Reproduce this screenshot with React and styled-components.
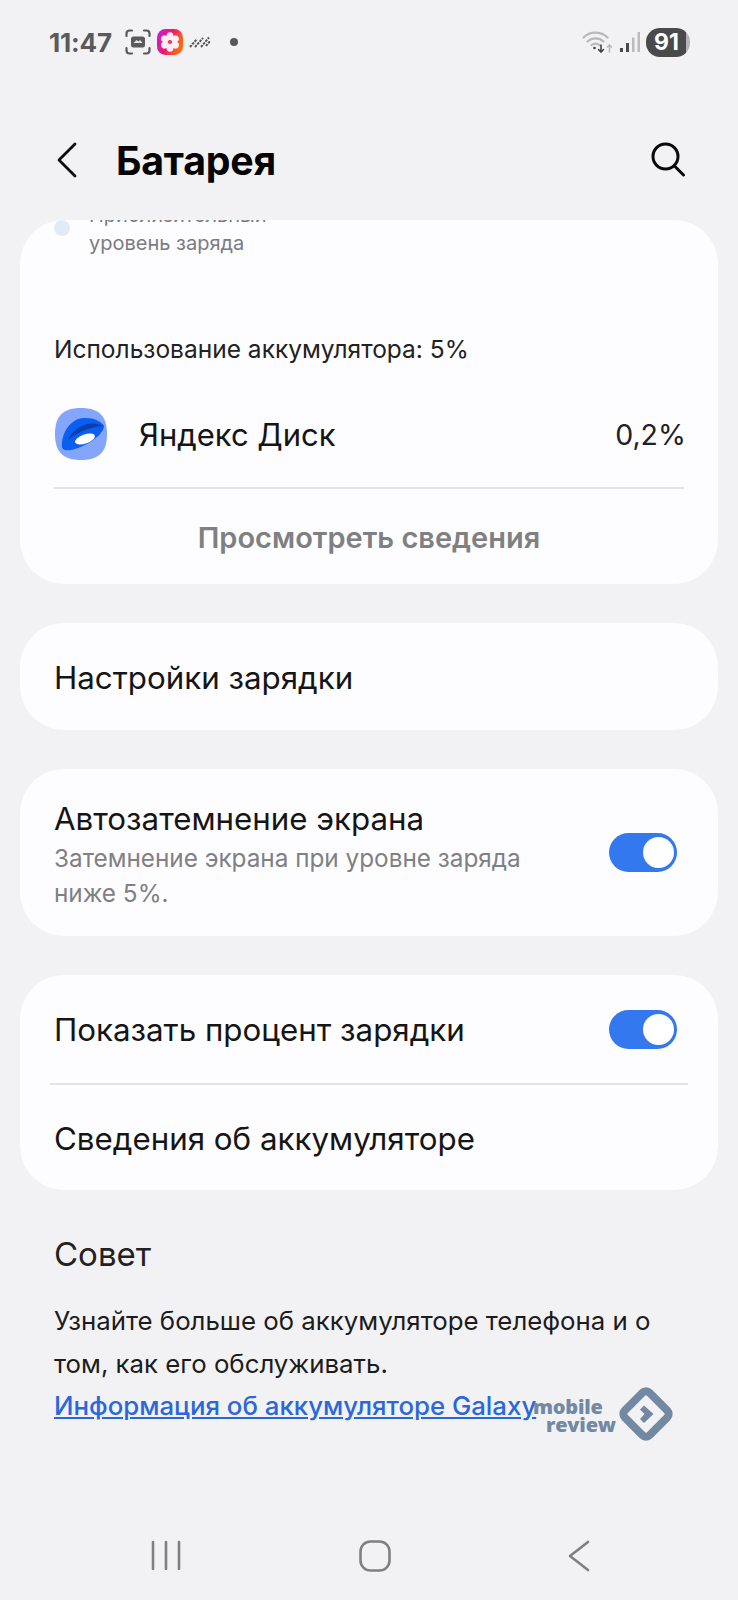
import React from "react";
import styled, { createGlobalStyle } from "styled-components";

const Global = createGlobalStyle`
  html, body { margin: 0; padding: 0; background: #f2f2f4; }
  * { box-sizing: border-box; }
`;
const Page = styled.div`
  position: relative; width: 738px; height: 1600px; background: #f2f2f4; overflow: hidden;
  display: flex; flex-direction: column;
  font-family: Inter, "Noto Sans", sans-serif; color: #111;
`;
const StatusBar = styled.div`
  height: 84px; padding: 0 48px 0 49px; display: flex; align-items: center; justify-content: space-between;
`;
const StatusGroup = styled.div`display: flex; align-items: center; gap: ${p => p.$gap || 0}px; margin-left: ${p => p.$ml || 0}px;`;
const Clock = styled.span`font-size: 26px; font-weight: 700; color: #5a5a5c; letter-spacing: -0.2px;`;
const Battery = styled.div`
  width: 44px; height: 29px; border-radius: 14px; background: linear-gradient(90deg, #4a4a4c 91%, #b4b4b6 91%);
  color: #fff; font-size: 23px; font-weight: 700; display: flex; align-items: center; justify-content: center; padding-right: 3px;
`;
const Dot = styled.span`width: 8px; height: 8px; border-radius: 50%; background: #58585a; margin-left: 13px;`;
const Header = styled.div`
  height: 72px; margin: 40px 0 24px; padding: 0 53px 0 56px; display: flex; align-items: center;
`;
const Title = styled.h1`margin: 0 0 0 38px; flex: 1; font-size: 39.300px; font-weight: 700; color: #050505; letter-spacing: -0.2px;`;
const Main = styled.main`flex: 1; padding: 0 20px; display: flex; flex-direction: column; gap: 39px;`;
const Card = styled.section`background: #fdfdff; border-radius: 44px; overflow: hidden; position: relative; height: ${p => p.$h}px;`;
const Clipped = styled.div`
  display: flex; gap: 19px; margin: -12px 0 0 34px; height: 66px;
`;
const LegendDot = styled.span`width: 16px; height: 16px; border-radius: 50%; background: #e2ebf5; margin-top: 12px; flex: none;`;
const LegendText = styled.div`font-size: 20px; line-height: 28px; color: #7b7b7f; transform: translateY(-7px);`;
const UsageLabel = styled.div`margin: 60px 0 0 34px; font-size: 24.500px; line-height: 30px; color: #222;`;
const AppRow = styled.div`display: flex; align-items: center; padding: 0 32px 0 35px; margin-top: 44px; height: 52px;`;
const AppName = styled.div`flex: 1; margin-left: 32px; font-size: 31px; color: #151515;`;
const AppValue = styled.div`font-size: 28.500px; color: #222;`;
const Divider = styled.hr`border: 0; height: 2px; background: #e3e3e6; margin: ${p => p.$m};`;
const LinkRow = styled.div`height: 96px; display: flex; align-items: center; justify-content: center; font-size: 29px; font-weight: 600; color: #808082;`;
const Row = styled.div`
  height: ${p => p.$h}px; padding: 0 41px 0 34px; display: flex; align-items: center; justify-content: space-between; gap: 20px;
`;
const RowTitle = styled.div`font-size: 31.300px; line-height: 38px; padding-top: 2px; color: #151515;`;
const RowSub = styled.div`font-size: 24.300px; line-height: 35px; color: #808084; margin-top: 3px;`;
const RowBody = styled.div`margin-top: 4px; white-space: nowrap;`;
const Toggle = styled.div`
  width: 68px; height: 39px; flex: none; border-radius: 20px; background: #3478f0; padding: 4px 3px; display: flex; justify-content: flex-end;
  &::after { content: ""; width: 31px; height: 31px; border-radius: 50%; background: #fff; }
`;
const Tip = styled.div`padding: 0 34px; margin-top: 5px;`;
const TipTitle = styled.div`font-size: 33px; line-height: 40px; color: #222;`;
const TipText = styled.p`margin: 25px 0 0; font-size: 25.800px; line-height: 43px; color: #1c1c1c;`;
const TipLink = styled.a`display: block; font-size: 25.800px; line-height: 40px; margin-top: 1px; color: #2a67dd; text-decoration: underline; white-space: nowrap; font-weight: 500;`;
const NavBar = styled.nav`
  height: 86px; display: flex; align-items: flex-start; justify-content: space-between; padding: 26px 148px 0 151px;
`;
const Watermark = styled.div`
  position: absolute; left: 533px; top: 1387px; display: flex; align-items: center; gap: 3px;
`;
const WatermarkText = styled.div`
  font-family: "Open Sans", sans-serif; font-size: 20px; line-height: 18px; font-weight: 800; color: #7389a3; letter-spacing: -0.2px;
  display: flex; flex-direction: column; margin-top: 4px;
`;
const WatermarkLine = styled.span`margin-left: ${p => p.$ml || 0}px;`;

const ScreenshotIcon = () => (
  <svg width="26" height="26" viewBox="0 0 26 26" fill="none" stroke="#5a5a5c" strokeWidth="2.2" strokeLinecap="round">
    <path d="M1.5 7V4.5a3 3 0 0 1 3-3H7M19 1.5h2.5a3 3 0 0 1 3 3V7M24.5 19v2.500a3 3 0 0 1-3 3H19M7 24.500H4.500a3 3 0 0 1-3-3V19" />
    <rect x="6" y="7.500" width="14" height="11" rx="2.500" fill="#5a5a5c" stroke="none" />
    <path d="M8.500 14l3-3 2 1.500 1.500-1.500 2.500 3z" fill="#e4e4e6" stroke="none" />
  </svg>
);
const GalleryIcon = () => (
  <svg width="26" height="26" viewBox="0 0 26 26">
    <defs>
      <linearGradient id="gal" x1="0" y1="0" x2="1" y2="0.4">
        <stop offset="0" stopColor="#c81fe0" />
        <stop offset="0.55" stopColor="#f0186e" />
        <stop offset="1" stopColor="#fb6a10" />
      </linearGradient>
    </defs>
    <rect width="26" height="26" rx="8.500" fill="url(#gal)" />
    {[0, 60, 120, 180, 240, 300].map(a => (
      <ellipse key={a} cx="13" cy="7.200" rx="3.500" ry="4" fill="#fdeef8" transform={`rotate(${a} 13 13)`} />
    ))}
    <circle cx="13" cy="13" r="1.500" fill="#f04a2a" />
  </svg>
);
const DataIcon = () => (
  <svg width="22" height="14" viewBox="0 0 22 14" stroke="#555" strokeWidth="2" strokeDasharray="2.500 1" fill="none">
    <path d="M1 12L8 4M6 12L14 3M12 12L20 2.500M17 11l4-5" />
  </svg>
);
const WifiIcon = () => (
  <svg width="32" height="24" viewBox="0 0 32 24" fill="none" strokeLinecap="round">
    <path d="M1.500 7.500C8 1 19 1 25.500 7.500" stroke="#b9b9bb" strokeWidth="2.200" />
    <path d="M5.500 11.500C10 7.300 17 7.300 21.500 11.500" stroke="#b9b9bb" strokeWidth="2.200" />
    <path d="M9.500 15.200c2.500-2 5.500-2 8 0" stroke="#b9b9bb" strokeWidth="2.200" />
    <circle cx="12.500" cy="18" r="1.300" fill="#444" />
    <path d="M19 15v7M16.500 19.500L19 22l2.500-2.500" stroke="#444" strokeWidth="1.600" />
    <path d="M27.500 22v-7M25.500 17l2-2 2 2" stroke="#b9b9bb" strokeWidth="1.600" />
  </svg>
);
const SignalIcon = () => (
  <svg width="20" height="21" viewBox="0 0 20 21">
    <rect x="0" y="16" width="3" height="4" fill="#4a4a4c" />
    <rect x="6" y="11" width="3" height="9" fill="#4a4a4c" />
    <rect x="12" y="5.500" width="2.500" height="14.500" fill="#bcbcbe" />
    <rect x="17.500" y="0" width="2.500" height="20" fill="#bcbcbe" />
  </svg>
);
const BackIcon = () => (
  <svg width="22" height="36" viewBox="0 0 22 36" fill="none" stroke="#0a0a0a" strokeWidth="2.800" strokeLinecap="round" strokeLinejoin="round">
    <path d="M19 2L3 18l16 16" />
  </svg>
);
const SearchIcon = () => (
  <svg width="34" height="36" viewBox="0 0 34 36" fill="none" stroke="#0a0a0a" strokeWidth="3" strokeLinecap="round">
    <circle cx="14.500" cy="14.500" r="12.500" />
    <path d="M23.500 24l9 9" />
  </svg>
);
const DiskIcon = () => (
  <svg width="52" height="52" viewBox="0 0 52 52">
    <path d="M26 0C44 0 52 8 52 26S44 52 26 52 0 44 0 26 8 0 26 0z" fill="#83a6fb" />
    <path d="M7 39C6 28 13 11 29 10 38 9.500 46 13 49 18 49 24 40 32 30 37 20 42 8 45 7 39z" fill="#0b5ff0" />
    <path d="M13 32C16 24 26 16 36 15.500 41 15.200 45 16.500 48.500 18 42 18.500 26 21 13 32z" fill="#0a3fb0" />
    <ellipse cx="30" cy="31" rx="10.500" ry="4.500" fill="#fff" transform="rotate(-20 30 31)" />
  </svg>
);
const MrLogo = () => (
  <svg width="54" height="54" viewBox="0 0 54 54" fill="none">
    <rect x="9.500" y="9.500" width="35" height="35" rx="5" transform="rotate(45 27 27)" stroke="#7389a3" strokeWidth="8" />
    <path d="M25 18.500l9.500 8.500-9.500 9-4-4 4.500-5-4.500-4.500z" fill="#7389a3" />
  </svg>
);
const RecentsIcon = () => (
  <svg width="30" height="30" viewBox="0 0 30 30" stroke="#808082" strokeWidth="2.600" strokeLinecap="round">
    <path d="M2 2v27M15 2v27M28 2v27" />
  </svg>
);
const HomeIcon = () => (
  <svg width="32" height="32" viewBox="0 0 32 32" fill="none" stroke="#808082" strokeWidth="2.600">
    <rect x="1.500" y="1.500" width="29" height="29" rx="10" />
  </svg>
);
const NavBackIcon = () => (
  <svg width="22" height="32" viewBox="0 0 22 32" fill="none" stroke="#808082" strokeWidth="2.600" strokeLinecap="round" strokeLinejoin="round">
    <path d="M20 2L2 16l18 14" />
  </svg>
);

export default function App() {
  return (
    <Page>
      <Global />
      <StatusBar>
        <StatusGroup>
          <Clock>11:47</Clock>
          <StatusGroup $gap={6} $ml={13}>
            <ScreenshotIcon />
            <GalleryIcon />
            <DataIcon />
            <Dot />
          </StatusGroup>
        </StatusGroup>
        <StatusGroup $gap={6}>
          <WifiIcon />
          <SignalIcon />
          <Battery>91</Battery>
        </StatusGroup>
      </StatusBar>
      <Header>
        <BackIcon />
        <Title>Батарея</Title>
        <SearchIcon />
      </Header>
      <Main>
        <Card $h={364}>
          <Clipped>
            <LegendDot />
            <LegendText>Приблизительный<br />уровень заряда</LegendText>
          </Clipped>
          <UsageLabel>Использование аккумулятора: 5%</UsageLabel>
          <AppRow>
            <DiskIcon />
            <AppName>Яндекс Диск</AppName>
            <AppValue>0,2%</AppValue>
          </AppRow>
          <Divider $m="27px 34px 0" />
          <LinkRow>Просмотреть сведения</LinkRow>
        </Card>
        <Card $h={107}>
          <Row $h={107}><RowTitle>Настройки зарядки</RowTitle></Row>
        </Card>
        <Card $h={167}>
          <Row $h={167}>
            <RowBody>
              <RowTitle>Автозатемнение экрана</RowTitle>
              <RowSub>Затемнение экрана при уровне заряда<br />ниже 5%.</RowSub>
            </RowBody>
            <Toggle />
          </Row>
        </Card>
        <Card $h={215}>
          <Row $h={108}><RowTitle>Показать процент зарядки</RowTitle><Toggle /></Row>
          <Divider $m="0 30px" />
          <Row $h={105}><RowTitle>Сведения об аккумуляторе</RowTitle></Row>
        </Card>
        <Tip>
          <TipTitle>Совет</TipTitle>
          <TipText>Узнайте больше об аккумуляторе телефона и о<br />том, как его обслуживать.</TipText>
          <TipLink href="#">Информация об аккумуляторе Galaxy</TipLink>
        </Tip>
      </Main>
      <NavBar>
        <RecentsIcon />
        <HomeIcon />
        <NavBackIcon />
      </NavBar>
      <Watermark>
        <WatermarkText>
          <WatermarkLine>mobile</WatermarkLine>
          <WatermarkLine $ml={13}>review</WatermarkLine>
        </WatermarkText>
        <MrLogo />
      </Watermark>
    </Page>
  );
}
